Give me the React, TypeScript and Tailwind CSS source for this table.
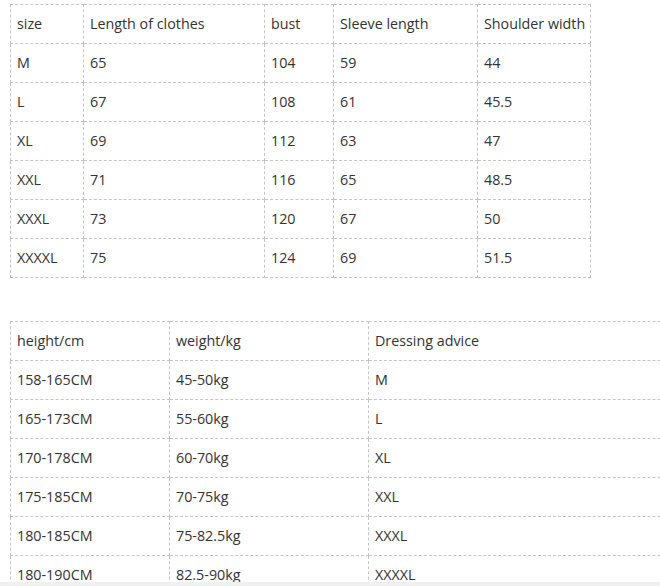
const sizeRows = [
  ["size", "Length of clothes", "bust", "Sleeve length", "Shoulder width"],
  ["M", "65", "104", "59", "44"],
  ["L", "67", "108", "61", "45.5"],
  ["XL", "69", "112", "63", "47"],
  ["XXL", "71", "116", "65", "48.5"],
  ["XXXL", "73", "120", "67", "50"],
  ["XXXXL", "75", "124", "69", "51.5"],
];

const adviceRows = [
  ["height/cm", "weight/kg", "Dressing advice"],
  ["158-165CM", "45-50kg", "M"],
  ["165-173CM", "55-60kg", "L"],
  ["170-178CM", "60-70kg", "XL"],
  ["175-185CM", "70-75kg", "XXL"],
  ["180-185CM", "75-82.5kg", "XXXL"],
  ["180-190CM", "82.5-90kg", "XXXXL"],
];

const cell =
  "h-[39px] border border-dashed border-[#c4c4c4] px-[6px] align-middle text-left font-normal whitespace-nowrap";

export default function App() {
  return (
    <div
      className="flex h-[586px] w-[660px] flex-col overflow-hidden bg-white text-[14.3px] text-[#333]"
      style={{ fontFamily: '"Open Sans", "Noto Sans", sans-serif' }}
    >
      <div className="flex-1 overflow-hidden pl-[10px] pt-[4px]">
        <table className="w-[581px] table-fixed border-collapse">
          <colgroup>
            <col className="w-[73px]" />
            <col className="w-[181px]" />
            <col className="w-[69px]" />
            <col className="w-[144px]" />
            <col className="w-[113px]" />
          </colgroup>
          <tbody>
            {sizeRows.map((row, i) => (
              <tr key={i}>
                {row.map((v, j) => (
                  <td key={j} className={cell}>
                    {v}
                  </td>
                ))}
              </tr>
            ))}
          </tbody>
        </table>

        <table className="mt-[43px] w-[720px] table-fixed border-collapse">
          <colgroup>
            <col className="w-[159px]" />
            <col className="w-[199px]" />
            <col />
          </colgroup>
          <tbody>
            {adviceRows.map((row, i) => (
              <tr key={i}>
                {row.map((v, j) => (
                  <td key={j} className={cell}>
                    {v}
                  </td>
                ))}
              </tr>
            ))}
          </tbody>
        </table>
      </div>
      <div className="h-[4px] shrink-0 bg-[#f0f0f0]" />
    </div>
  );
}
